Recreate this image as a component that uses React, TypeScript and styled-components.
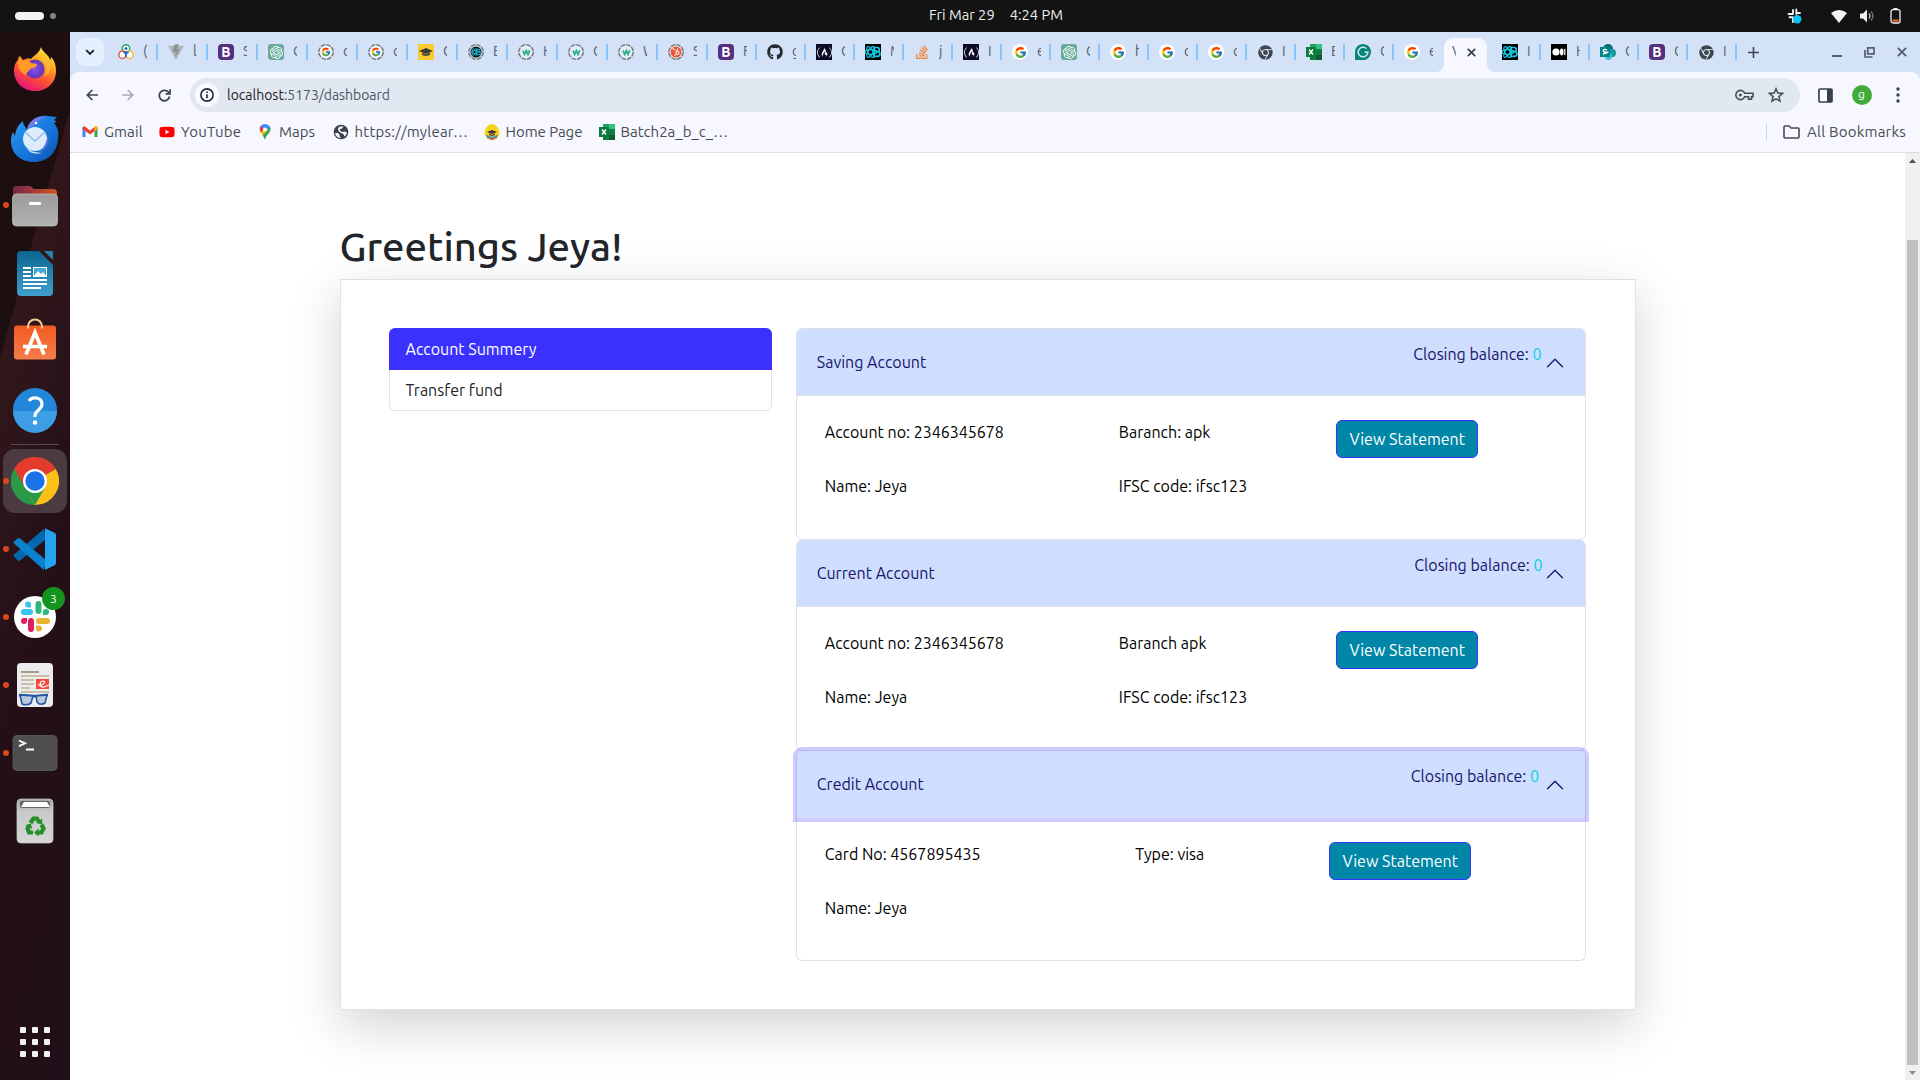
import React from "react";
import styled, { createGlobalStyle, css } from "styled-components";
import { FcGoogle } from "react-icons/fc";
import { FaGithub, FaStackOverflow, FaHubspot, FaFreeCodeCamp, FaChrome, FaYoutube } from "react-icons/fa";
import { SiOpenai, SiGrammarly } from "react-icons/si";

const GlobalStyle = createGlobalStyle`
  *, *::before, *::after { box-sizing: border-box; }
  body { margin: 0; background: #fff; overflow: hidden; font-family: Ubuntu, "Open Sans", "Noto Sans", sans-serif; }
  p, h1 { margin: 0; }
  svg { display: block; flex: none; }
`;

const Desktop = styled.div`
  width: 1920px; height: 1080px; display: flex; flex-direction: column; overflow: hidden;
`;

/* ---------- system bar ---------- */
const SystemBar = styled.header`
  height: 32px; flex: none; background: #131313; display: grid;
  grid-template-columns: 929px auto 1fr; align-items: center; color: #ededed; font-size: 14.67px;
`;
const Workspaces = styled.div`display: flex; align-items: center; gap: 6px; padding-left: 15px;`;
const ActiveSpace = styled.i`width: 29px; height: 8px; border-radius: 4px; background: #f2f2f2;`;
const SpaceDot = styled.i`width: 6px; height: 6px; border-radius: 50%; background: #838383;`;
const Clock = styled.div`display: flex; gap: 15px; line-height: 30px; height: 32px;`;
const Tray = styled.div`display: flex; align-items: center; justify-content: flex-end; padding-right: 19px;`;
const TrayItem = styled.span<{ $gap: number }>`margin-left: ${(p) => p.$gap}px;`;
const Txt = styled.span<{ $ls?: number }>`letter-spacing: ${(p) => p.$ls ?? 0}px; white-space: pre;`;

const Workarea = styled.div`flex: 1; min-height: 0; display: flex;`;

/* ---------- dock ---------- */
const Dock = styled.nav`
  width: 70px; flex: none; display: flex; flex-direction: column; padding-top: 3px;
  background: linear-gradient(105.8deg, #1d0f10 88px, #31171b 89px, #2b141a 140px, #240f17 200px, #211019 352px);
`;
const DockItem = styled.div<{ $running?: boolean }>`
  position: relative; height: 68px; display: flex; align-items: center; justify-content: center; flex: none;
  ${(p) => p.$running && css`
    &::before { content: ""; position: absolute; left: 3px; top: 31px; width: 6px; height: 6px; border-radius: 50%; background: #d9481a; z-index: 1; }
  `}
`;
const ActiveTile = styled.div`
  width: 64px; height: 64px; border-radius: 12px; background: #4b3b40; display: flex; align-items: center; justify-content: center;
`;
const DockRule = styled.div`height: 4px; padding: 1px 11px 0; flex: none; &::after { content: ""; display: block; height: 1px; background: #594a4f; }`;
const Badge = styled.span`
  position: absolute; right: 5px; top: 4px; width: 23px; height: 23px; border-radius: 50%;
  background: #14931f; color: #fff; font-size: 12px; line-height: 23px; text-align: center;
`;
const AppsButton = styled.div`
  margin-top: auto; height: 53px; padding: 0 20px; display: grid; grid-template-columns: repeat(3, 6px);
  grid-auto-rows: 6px; gap: 6px;
`;
const AppDot = styled.i`background: #f2f2f2; border-radius: 1px;`;

/* ---------- browser chrome ---------- */
const Browser = styled.div`flex: 1; min-width: 0; display: flex; flex-direction: column; background: #d3e2f7;`;
const TabStrip = styled.div`height: 40px; flex: none; display: flex; align-items: flex-start; padding: 6px 8px 0 6px;`;
const TabSearch = styled.button`
  width: 28px; height: 28px; border: 0; border-radius: 9px; background: #e5f0fe; padding: 0; margin-right: 2px;
  display: flex; align-items: center; justify-content: center; flex: none;
`;
const Tab = styled.div<{ $w: number; $rule: boolean }>`
  width: ${(p) => p.$w}px; height: 28px; flex: none; display: flex; align-items: center; gap: 9px;
  &::before { content: ""; width: 2px; height: 16px; margin-right: 1px; background: ${(p) => (p.$rule ? "#8ac6fd" : "transparent")}; }
`;
const TabTitle = styled.span`width: 4px; overflow: hidden; font-size: 14px; color: #4e5d6e; line-height: 20px; margin-bottom: 2px;`;
const ActiveTab = styled.div`
  position: relative; width: 43px; height: 34px; margin: 0 3px; flex: none; background: #f6f7ff; border-radius: 9px 9px 0 0;
  display: flex; align-items: center; padding: 0 11px 6px 8px; justify-content: space-between;
  &::before, &::after { content: ""; position: absolute; bottom: 0; width: 9px; height: 9px; }
  &::before { left: -9px; background: radial-gradient(circle at 0 0, transparent 9px, #f6f7ff 9.5px); }
  &::after { right: -9px; background: radial-gradient(circle at 100% 0, transparent 9px, #f6f7ff 9.5px); }
`;
const NewTab = styled.div`display: flex; align-items: center; height: 28px; &::before { content: ""; width: 2px; height: 16px; background: #8ac6fd; margin-right: 11px; }`;
const WindowButtons = styled.div`margin-left: auto; height: 28px; display: flex; align-items: center; gap: 22px; padding-right: 5px;`;

const Fav = styled.span<{ $bg?: string; $fg?: string; $round?: boolean; $r?: number }>`
  width: 16px; height: 16px; flex: none; display: flex; align-items: center; justify-content: center; overflow: hidden;
  background: ${(p) => p.$bg ?? "transparent"}; color: ${(p) => p.$fg ?? "#fff"};
  border-radius: ${(p) => (p.$round ? "50%" : `${p.$r ?? 0}px`)};
  font-weight: 700; font-size: 14px; line-height: 16px;
`;
const RingBox = styled.span<{ $fg?: string }>`
  width: 16px; height: 16px; flex: none; display: grid; place-items: center; color: ${(p) => p.$fg ?? "inherit"};
  > * { grid-area: 1 / 1; }
`;

const ToolbarBg = styled.div`background: #f6f7ff; border-radius: 9px 9px 0 0; flex: none;`;
const Toolbar = styled.div`height: 46px; display: flex; align-items: center; padding: 0 8px 0 12px;`;
const NavIcon = styled.span`width: 20px; height: 20px; margin-right: 16px; display: flex; align-items: center; justify-content: center;`;
const Omnibox = styled.div`
  width: 1610px; height: 34px; border-radius: 17px; background: #e1e8f2; display: flex; align-items: center; flex: none;
  padding: 0 16px 0 5px; font-size: 14px; color: #4d565f;
`;
const InfoCircle = styled.span`width: 24px; height: 24px; border-radius: 50%; background: #f9faff; display: flex; align-items: center; justify-content: center; margin-right: 8px;`;
const Host = styled.span`color: #1e2126;`;
const OmniActions = styled.span`margin-left: auto; display: flex; align-items: center; gap: 14px;`;
const ToolActions = styled.div`margin-left: 18px; display: flex; align-items: center; gap: 18.5px;`;
const DotsButton = styled.span`margin-left: 6px;`;
const Avatar = styled.span`width: 20px; height: 20px; border-radius: 50%; background: #43ab39; color: #fff; font-size: 12px; line-height: 18px; text-align: center;`;
const BookmarkBar = styled.div`height: 35px; border-bottom: 1px solid #dadfec; display: flex; align-items: center; padding: 0 14px 6px 12px; font-size: 15px; color: #474c52;`;
const Bookmark = styled.span<{ $w: number }>`width: ${(p) => p.$w}px; display: flex; align-items: center; gap: 6px; line-height: 20px;`;
const AllBookmarks = styled.span`margin-left: auto; display: flex; align-items: center; gap: 7px; line-height: 20px; &::before { content: ""; width: 1px; height: 16px; margin-right: 9px; background: #b4dbfd; }`;

/* ---------- page ---------- */
const Viewport = styled.div`flex: 1; min-height: 0; display: flex; background: #fff;`;
const Page = styled.main`flex: 1; display: flex; flex-direction: column; align-items: center; padding-top: 69.95px; color: #212529; overflow: hidden;`;
const Container = styled.div`width: 1296px;`;
const Greeting = styled.h1`font-size: 40px; font-weight: 500; line-height: 48px; margin-bottom: 8px; color: #212529;`;
const Card = styled.section`
  height: 731.4px; border: 1px solid #dee2e6; padding: 48px; display: flex; gap: 24px; align-items: flex-start;
  box-shadow: 0 16px 48px rgba(0, 0, 0, 0.175); background: #fff;
`;
const Menu = styled.div`width: 383.3px; border: 1px solid #dee2e6; border-radius: 6px; font-size: 16px;`;
const MenuItem = styled.div<{ $active?: boolean }>`
  height: ${(p) => (p.$active ? 42 : 40)}px; margin: ${(p) => (p.$active ? "-1px -1px 0" : "0")};
  padding: ${(p) => (p.$active ? "9px 17px 0" : "8px 16px 0")}; line-height: 24px;
  border-radius: ${(p) => (p.$active ? "6px 6px 0 0" : "0 0 6px 6px")};
  background: ${(p) => (p.$active ? "#3a31ff" : "#fff")}; color: ${(p) => (p.$active ? "#fff" : "#212529")};
`;
const Accordion = styled.div`width: 790.7px; flex: none; font-size: 16px; line-height: 24px;`;
const Item = styled.div<{ $first: boolean }>`
  border: 1px solid #dee2e6; border-radius: 6px; ${(p) => !p.$first && "border-top: 0;"}
`;
const ItemHeader = styled.div<{ $focus: boolean }>`
  height: 67px; padding: 0 20px; display: flex; align-items: center; background: #cfdeff; color: #17146b;
  border-radius: 5px 5px 0 0; position: relative;
  box-shadow: ${(p) => (p.$focus ? "0 0 0 4px rgba(83, 63, 255, 0.27)" : "inset 0 -1px 0 #dee2e6")};
  > svg { margin-top: 1px; }
`;
const Closing = styled.p<{ $right: number }>`margin: 0 ${(p) => p.$right}px 16px auto;`;
const Zero = styled.span`color: #0ecfe0;`;
const ItemBody = styled.div<{ $c1: number; $c2: number }>`
  height: 142.8px; padding: 24px 28px; color: #000; display: grid;
  grid-template-columns: ${(p) => p.$c1}px ${(p) => p.$c2}px auto; align-items: start; justify-content: start;
`;
const Details = styled.div`display: grid; row-gap: 30px;`;
const Statement = styled.button`
  width: 142px; height: 38px; border: 1px solid #3a31ff; border-radius: 6px; background: #0086a6; color: #fff;
  font: 16px/24px Ubuntu, "Open Sans", "Noto Sans", sans-serif; padding: 0;
`;
const ScrollTrack = styled.div`width: 15px; flex: none; background: #f0f0f0; display: flex; flex-direction: column; align-items: center; padding: 6px 0 5px;`;
const ScrollThumb = styled.div`width: 11px; height: 825px; background: #c0c0c0; margin: 77px 0 6px;`;

/* ---------- favicons ---------- */
const Ringed = ({ fill, fg, children }: { fill: string; fg?: string; children: React.ReactNode }) => (
  <RingBox $fg={fg}>
    <svg width="16" height="16" viewBox="0 0 16 16"><circle cx="8" cy="8" r="7.200" fill={fill} stroke="#74797f" strokeWidth="1.500" strokeDasharray="4.600 1.050" /></svg>
    {children}
  </RingBox>
);
const G = () => <Fav $bg="#fff" $round><FcGoogle size={13} /></Fav>;
const GDashed = () => <Ringed fill="#eef3fb"><FcGoogle size={10} /></Ringed>;
const Boot = () => <Fav $bg="#563080" $r={4}>B</Fav>;
const Gpt = () => <Fav $bg="#69ab9b" $r={3}><SiOpenai size={13} /></Fav>;
const W = () => (
  <Ringed fill="#e3ecf7">
    <svg width="9" height="7" viewBox="0 0 11 9"><path d="M1 2l2 5 2.300-5 2.200 5L9.600 1.500" fill="none" stroke="#2fae86" strokeWidth="2.200" /></svg>
  </Ringed>
);
const Fcc = () => <Fav $bg="#0b0b26"><FaFreeCodeCamp size={15} /></Fav>;
const reactBMark = (
  <>
    <ellipse cx="6" cy="8" rx="6" ry="2.400" strokeWidth="1.200" />
    <ellipse cx="5.500" cy="8" rx="6" ry="2.400" strokeWidth="1.200" transform="rotate(60 5.500 8)" />
    <ellipse cx="5.500" cy="8" rx="6" ry="2.400" strokeWidth="1.200" transform="rotate(-60 5.500 8)" />
    <path d="M9 3.500h3.200a2 2 0 0 1 0 4.200H9zM9 7.700h3.600a2.300 2.300 0 0 1 0 4.600H9z" strokeWidth="1.700" />
  </>
);
const ReactB = () => <Fav $bg="#000"><svg width="16" height="16" viewBox="0 0 16 16" fill="none" stroke="#18c8e2">{reactBMark}</svg></Fav>;
const ReactBRinged = () => (
  <Ringed fill="#d8e2ee">
    <svg width="12" height="12" viewBox="0 0 12 12"><circle cx="6" cy="6" r="5.500" fill="#06181d" /></svg>
    <svg width="10" height="10" viewBox="0 0 16 16" fill="none" stroke="#25b4ca">{reactBMark}</svg>
  </Ringed>
);
const Chrome = () => <Fav $fg="#40464e" $round><FaChrome size={15} /></Fav>;
const Hat = () => (
  <Fav $bg="#fccb2c">
    <svg width="14" height="14" viewBox="0 0 14 14"><path d="M0 6l7-3 7 3-7 3z" fill="#403b35" /><path d="M3 7.500v2.500q4 2 8 0V7.500L7 9.300z" fill="#57503f" /></svg>
  </Fav>
);
const Excel = () => (
  <svg width="16" height="16" viewBox="0 0 16 16">
    <path d="M4 0h12v16H4z" fill="#107c41" /><path d="M4 0h6v5H4z" fill="#21a366" /><path d="M10 0h6v5h-6z" fill="#33c481" /><path d="M10 11h6v5h-6z" fill="#0e5c34" />
    <path d="M0 3h10v10H0z" fill="#0b7a3b" /><path d="M3 5.500l4 5M7 5.500l-4 5" stroke="#fff" strokeWidth="1.500" />
  </svg>
);
const Share = () => (
  <svg width="16" height="16" viewBox="0 0 16 16">
    <circle cx="8" cy="5" r="5" fill="#036c70" /><circle cx="12" cy="9" r="4.200" fill="#1a9ba1" /><circle cx="8.500" cy="12.500" r="3.500" fill="#37c6d0" />
    <path d="M0 3h10v10H0z" fill="#038387" /><path d="M7 6q-3.700-1.500-3.700.5t3.500 1.700-3.800 1.800" fill="none" stroke="#fff" strokeWidth="1.400" />
  </svg>
);
const Medium = () => (
  <Fav $bg="#000">
    <svg width="14" height="8" viewBox="0 0 14 8" fill="#fff"><circle cx="4" cy="4" r="3.600" /><ellipse cx="9.700" cy="4" rx="1.800" ry="3.400" /><rect x="12.200" y=".8" width="1.200" height="6.400" /></svg>
  </Fav>
);
const Rings = () => (
  <svg width="16" height="16" viewBox="0 0 16 16" fill="none" strokeWidth="1.500">
    <circle cx="8" cy="4.500" r="3.700" stroke="#27a567" fill="#fff" /><circle cx="4.500" cy="10.700" r="3.700" stroke="#e25b4a" fill="#fff" /><circle cx="11.500" cy="10.700" r="3.700" stroke="#efb63d" fill="#fff" />
    <circle cx="8" cy="4.600" r="1.500" fill="#2b72b8" stroke="none" /><path d="M8 7v6M5.500 8l2.500 1.500L10.500 8" stroke="#2b72b8" strokeWidth="2" />
  </svg>
);
const Vite = () => (
  <svg width="16" height="16" viewBox="0 0 16 16"><path d="M0 1.500L8 16l8-14.500-8 1z" fill="#b1b4b9" /><path d="M6 1l5-1-2 5h3L7 13l1-5H5z" fill="#8c8f94" /></svg>
);

const leftTabs: [React.ReactNode, string][] = [
  [<Rings />, "("], [<Vite />, "l"], [<Boot />, "S"], [<Gpt />, "C"], [<GDashed />, "c"], [<GDashed />, "c"], [<Hat />, "C"],
  [<ReactBRinged />, "E"], [<W />, "H"], [<W />, "C"], [<W />, "W"],
  [<Ringed fill="#e5e9f0" fg="#f0573a"><svg width="12" height="12" viewBox="0 0 12 12"><circle cx="6" cy="6" r="5.500" fill="#f0573a" /></svg><Fav><FaHubspot size={8} /></Fav></Ringed>, "S"], [<Boot />, "F"],
  [<Fav $fg="#23292f"><FaGithub size={16} /></Fav>, "g"], [<Fcc />, "C"], [<ReactB />, "M"],
  [<Fav $fg="#f58233"><FaStackOverflow size={16} /></Fav>, "j"], [<Fcc />, "I"], [<G />, "e"], [<Gpt />, "C"], [<G />, "h"],
  [<G />, "c"], [<G />, "c"], [<Chrome />, "I"], [<Excel />, "E"],
  [<Fav $fg="#058572"><SiGrammarly size={16} /></Fav>, "C"], [<G />, "e"],
];
const rightTabs: [React.ReactNode, string][] = [
  [<ReactB />, "I"], [<Medium />, "H"], [<Share />, "C"], [<Boot />, "C"], [<Chrome />, "I"],
];

/* ---------- dock artwork ---------- */
const Firefox = () => (
  <svg width="48" height="48" viewBox="0 0 48 48">
    <defs>
      <linearGradient id="ff1" x1=".8" y1="0" x2=".3" y2="1"><stop offset="0" stopColor="#fff04a" /><stop offset=".35" stopColor="#ffa41e" /><stop offset=".65" stopColor="#ff4f33" /><stop offset="1" stopColor="#e3137f" /></linearGradient>
      <radialGradient id="ff2"><stop offset="0" stopColor="#8a52ee" /><stop offset="1" stopColor="#6332b5" /></radialGradient>
    </defs>
    <path d="M30 2c1 4 5 6 7 9 1 1 2 3 2 4 1-1 1-2 1-3 4 4 5 9 5 14 0 12-9 20-21 20S3 37 3 26c0-5 1-8 4-11l1-4 4 4c3-1 5-2 8-1 3-4 8-5 10-12z" fill="url(#ff1)" />
    <circle cx="24" cy="24" r="9.500" fill="url(#ff2)" />
    <path d="M7 16l2-5 3 5c4-1 6-1 8 2l6 1c0 3-3 4-7 5-1 3-4 3-4 6-3-1-9-5-8-14z" fill="#ff9a25" />
    <path d="M28 15c9 0 9 12 5 17 5-2 8-8 5-15-2-4-7-6-10-2z" fill="#ffbf35" opacity=".75" />
  </svg>
);
const Thunderbird = () => (
  <svg width="48" height="48" viewBox="0 -2 48 48" overflow="visible">
    <defs><linearGradient id="tb1" x1="0" y1="0" x2="1" y2="1"><stop offset="0" stopColor="#2b9cf2" /><stop offset=".6" stopColor="#1573d8" /><stop offset="1" stopColor="#0a4fa8" /></linearGradient></defs>
    <path d="M17 11C20 4 28 0 36 1l10 1-3 3c1 0 2 1 2 2l-2 1c4 5 5 9 4 16-1 14-11 23-24 23C9 47 0 38 0 26c0-5 1-6 2-9l2 4C5 13 8 9 12 6c0 5 3 5 4 9z" fill="url(#tb1)" />
    <path d="M16 14C19 5 27 1 35 2c-5 1-9 4-12 8z" fill="#7c79e8" />
    <circle cx="25" cy="8" r="1.200" fill="#fff" />
    <circle cx="24" cy="24" r="12" fill="#dcecfb" /><path d="M14 17l10 9 10-9" fill="none" stroke="#8dbce8" strokeWidth="1.500" />
    <path d="M16 33c4 4 8 4 15 5-8 2-14-1-15-5z" fill="#c3dbf6" /><path d="M37 20c2 10-3 16-10 18 6-5 8-10 10-18z" fill="#5a79df" opacity=".8" />
  </svg>
);
const Files = () => (
  <svg width="48" height="48" viewBox="0 0 48 48">
    <defs><linearGradient id="fi1"><stop offset="0" stopColor="#73284c" /><stop offset="1" stopColor="#d6511f" /></linearGradient><linearGradient id="fi2" x1="0" y1="0" x2="0" y2="1"><stop offset="0" stopColor="#9b9b9b" /><stop offset="1" stopColor="#b2b2b2" /></linearGradient></defs>
    <path d="M2 8q0-3 3-3h14l4 3h19q4 0 4 4v14H2z" fill="url(#fi1)" />
    <rect x="1.500" y="13" width="45" height="32" rx="4" fill="url(#fi2)" stroke="#c5c5c5" strokeWidth=".7" /><rect x="18" y="21" width="12" height="3" rx="1" fill="#fff" />
  </svg>
);
const Writer = () => (
  <svg width="48" height="48" viewBox="0 0 48 48">
    <defs><linearGradient id="wr1" x1="0" y1="0" x2="0" y2="1"><stop offset="0" stopColor="#0c6492" /><stop offset="1" stopColor="#40a0cd" /></linearGradient></defs>
    <path d="M10 2h18l14 14v27q0 4-4 4H10q-4 0-4-4V6q0-4 4-4z" fill="url(#wr1)" /><path d="M33 2h9v9z" fill="#2380ad" />
    <path d="M12 19h8M12 23h8M12 27h8M12 31h24M12 35h24M12 39h18" stroke="#fff" strokeWidth="2" />
    <rect x="22.500" y="18.500" width="13" height="9" fill="#45a9d8" stroke="#fff" /><path d="M23 27l4-5 3 3 2-2 3 4z" fill="#fff" />
  </svg>
);
const Software = () => (
  <svg width="48" height="48" viewBox="0 2.500 48 48" overflow="visible">
    <defs><linearGradient id="so1" x1="0" y1="0" x2="0" y2="1"><stop offset="0" stopColor="#f35b21" /><stop offset="1" stopColor="#f47d4c" /></linearGradient></defs>
    <rect x="3" y="11" width="42" height="34" rx="3" fill="url(#so1)" />
    <path d="M17 14v-2a7 7 0 0 1 14 0v2" fill="none" stroke="#f1cd9a" strokeWidth="2" />
    <path d="M15 40l9-22 9 22M12 32h24" fill="none" stroke="#fff" strokeWidth="3.600" />
  </svg>
);
const Help = () => (
  <svg width="48" height="48" viewBox="0 0 48 48">
    <circle cx="24" cy="25" r="22" fill="#2286da" /><path d="M2 26h44a22 22 0 0 1-44 0z" fill="#3e9ee5" />
    <path d="M18 16c3-5 13-4 13 3 0 6-7 6-7 12v1" fill="none" stroke="#fff" strokeWidth="3.200" /><circle cx="24" cy="37.500" r="2.300" fill="#fff" />
  </svg>
);
const ChromeLogo = () => (
  <svg width="48" height="48" viewBox="0 0 48 48">
    <path d="M24 24L3.200 12A24 24 0 0 1 44.800 12z" fill="#e33b2e" /><path d="M24 24L44.800 12A24 24 0 0 1 24 48z" fill="#fbc116" /><path d="M24 24L24 48A24 24 0 0 1 3.200 12z" fill="#2a9a48" />
    <path d="M24 12h20.800L40 12z" fill="#e33b2e" /><path d="M34.400 30L24 48l-6-8z" fill="#fbc116" /><path d="M13.600 30L24 48l10.400-18z" fill="#2a9a48" />
    <path d="M3.200 12A24 24 0 0 1 24 0v12L13.600 30z" fill="#e33b2e" /><path d="M3.200 12L13.600 30 24 48A24 24 0 0 1 3.200 12z" fill="#2a9a48" />
    <circle cx="24" cy="24" r="12" fill="#fff" /><circle cx="24" cy="24" r="9.700" fill="#1b72e8" />
  </svg>
);
const Code = () => (
  <svg width="48" height="48" viewBox="0 0 48 48">
    <path d="M3 31.500q-1-1 0-2L33 4l2 10L9 35.500q-1 .8-2.300 0z" fill="#0468ae" />
    <path d="M3 16.500q-1 1 0 2L33 45l2-10L9 13.500q-1-.8-2.300 0z" fill="#0b82ce" />
    <path d="M34 3.200l9.500 4.500q1.500.8 1.500 2.300v28q0 1.500-1.500 2.300L34 45z" fill="#25a3f1" />
  </svg>
);
const SlackPaths = () => (
  <>
    <path d="M19 12a3 3 0 0 1 0 6h-6a3 3 0 0 1 0-6z" transform="translate(0 4)" fill="#36c5f0" /><path d="M20 14.500v-3a3 3 0 1 0-3 3z" fill="#36c5f0" />
    <path d="M25 19v-7a3 3 0 0 1 6 0v7a3 3 0 0 1-6 0z" transform="translate(-.500 -1)" fill="#2eb67d" /><path d="M32 22h3a3 3 0 1 0-3-3z" fill="#2eb67d" />
    <path d="M28 25h8a3 3 0 0 1 0 6h-8a3 3 0 0 1 0-6z" fill="#ecb22e" /><path d="M25 32.500v3a3 3 0 1 0 3-3z" fill="#ecb22e" />
    <path d="M17 28v8a3 3 0 0 0 6 0v-8a3 3 0 0 0-6 0z" fill="#e01e5a" /><path d="M16 25h-3a3 3 0 1 0 3 3z" fill="#e01e5a" />
  </>
);
const Slack = () => <svg width="48" height="48" viewBox="0 0 48 48"><circle cx="24" cy="24" r="21" fill="#fff" /><SlackPaths /></svg>;
const Viewer = () => (
  <svg width="48" height="48" viewBox="0 0 48 48">
    <rect x="6" y="2" width="36" height="44" rx="4" fill="#ececec" />
    <path d="M10 11h18" stroke="#a59d8a" strokeWidth="2" /><path d="M10 15h28M10 19h13M10 23h13M10 27h9M10 31h28" stroke="#c9c1ae" strokeWidth="2" />
    <rect x="25" y="18" width="13" height="10" fill="#f2493d" /><path d="M27 24c5 1 9-4 5-4s-4 7 1 6l5-2" fill="none" stroke="#fff" strokeWidth="1.200" />
    <path d="M8 34l14 1h4l11-1" fill="none" stroke="#1f4e9b" strokeWidth="2.500" /><path d="M9 34l2 9q5 2 9-1l2-7zM36 34l-2 8q-5 3-8-1l-1-6z" fill="#bac8dc" stroke="#2558a5" strokeWidth="1.600" />
  </svg>
);
const Terminal = () => (
  <svg width="48" height="48" viewBox="0 0 48 48">
    <rect x="2" y="6.500" width="44" height="35" rx="4" fill="#4e4e4e" stroke="#646464" strokeWidth=".7" />
    <path d="M8 11.500l6 2.800-6 2.800M15 20.500h8" fill="none" stroke="#fff" strokeWidth="1.900" />
  </svg>
);
const Trash = () => (
  <svg width="48" height="48" viewBox="0 0 48 48">
    <defs><linearGradient id="tr1" x1="0" y1="0" x2="0" y2="1"><stop offset="0" stopColor="#a5a5a5" /><stop offset=".3" stopColor="#c9c9c9" /><stop offset="1" stopColor="#d6d6d6" /></linearGradient></defs>
    <rect x="6" y="2" width="36" height="44" rx="4" fill="url(#tr1)" stroke="#d4d4d4" strokeWidth=".7" />
    <rect x="9" y="4" width="30" height="7" rx="2" fill="#666" /><path d="M10 10l3-5h23l3 5z" fill="#fff" />
    <g fill="none" stroke="#23902a" strokeWidth="4.200"><path d="M19.500 26l3-4.500h3.500l2 3.500" /><path d="M30.500 27.500l2 4-2 4h-4" /><path d="M22 35.500h-4l-1.500-4 2-3.500" /></g>
    <path d="M25.500 26.500l6 .5-.500-5.500zM27.500 31.500v8l-4.500-4zM14.500 28.500l5.500-2 1 5.500z" fill="#23902a" />
  </svg>
);

const Cross = ({ s = 9, c = "#3c4147" }: { s?: number; c?: string }) => (
  <svg width={s} height={s} viewBox="0 0 8 8"><path d="M.7.7l6.600 6.600M7.300.7L.7 7.300" stroke={c} strokeWidth="1.500" /></svg>
);
const Chevron = () => (
  <svg width="20" height="20" viewBox="0 0 16 16"><path d="M2 11l6-6 6 6" fill="none" stroke="#17146b" strokeWidth="1.050" strokeLinecap="round" strokeLinejoin="round" /></svg>
);

interface Account {
  title: string; right: number; c1: number; c2: number; left: string[]; mid: string[]; focus: boolean;
}
const accounts: Account[] = [
  { title: "Saving Account", right: 4, c1: 294, c2: 217.5, focus: false, left: ["Account no: 2346345678", "Name: Jeya"], mid: ["Baranch: apk", "IFSC code: ifsc123"] },
  { title: "Current Account", right: 3, c1: 294, c2: 217.5, focus: false, left: ["Account no: 2346345678", "Name: Jeya"], mid: ["Baranch apk", "IFSC code: ifsc123"] },
  { title: "Credit Account", right: 6.5, c1: 310.5, c2: 194, focus: true, left: ["Card No: 4567895435", "Name: Jeya"], mid: ["Type: visa"] },
];

const AccountItem = ({ a, first }: { a: Account; first: boolean }) => (
  <Item $first={first}>
    <ItemHeader $focus={a.focus}>
      <Txt>{a.title}</Txt>
      <Closing $right={a.right}>Closing balance: <Zero>0</Zero></Closing>
      <Chevron />
    </ItemHeader>
    <ItemBody $c1={a.c1} $c2={a.c2}>
      <Details>{a.left.map((t) => <Txt key={t}>{t}</Txt>)}</Details>
      <Details>{a.mid.map((t) => <Txt key={t}>{t}</Txt>)}</Details>
      <Statement>View Statement</Statement>
    </ItemBody>
  </Item>
);

export default function App() {
  return (
    <Desktop>
      <GlobalStyle />
      <SystemBar>
        <Workspaces><ActiveSpace /><SpaceDot /></Workspaces>
        <Clock><Txt>Fri Mar 29</Txt><Txt>4:24 PM</Txt></Clock>
        <Tray>
          <TrayItem $gap={0}>
            <svg width="15" height="16" viewBox="0 0 15 16"><g stroke="#f0f0f0" strokeWidth="1.900" strokeLinecap="round"><path d="M6 2v3.500M9.300 1.500V6M1.500 6H6M10 5h3M2.500 9.300H5M6 9.500V14" /></g><circle cx="10.200" cy="11.200" r="4.200" fill="#07c6f4" /></svg>
          </TrayItem>
          <TrayItem $gap={29}><svg width="16" height="13" viewBox="0 0 16 13"><path d="M0 3q8-6 16 0L8 13z" fill="#f2f2f2" /></svg></TrayItem>
          <TrayItem $gap={13}>
            <svg width="16" height="14" viewBox="0 0 16 14"><path d="M0 4.500h3L7 .5v13l-4-4H0z" fill="#f2f2f2" /><path d="M9 4.500q2 2.500 0 5" fill="none" stroke="#c5c5c5" strokeWidth="1.300" /><path d="M11 2.500q4 4.500 0 9" fill="none" stroke="#7a7a7a" strokeWidth="1.300" /></svg>
          </TrayItem>
          <TrayItem $gap={14}>
            <svg width="11" height="16" viewBox="0 0 11 16"><path d="M3.500 0h4v2h-4z" fill="#f2f2f2" /><rect x="1" y="1.700" width="9" height="13.300" rx="2" fill="none" stroke="#f2f2f2" strokeWidth="1.300" /><path d="M2.500 11.500h6v2.200h-6z" fill="#f0652b" /></svg>
          </TrayItem>
        </Tray>
      </SystemBar>

      <Workarea>
        <Dock>
          <DockItem><Firefox /></DockItem>
          <DockItem><Thunderbird /></DockItem>
          <DockItem $running><Files /></DockItem>
          <DockItem><Writer /></DockItem>
          <DockItem><Software /></DockItem>
          <DockItem><Help /></DockItem>
          <DockRule />
          <DockItem $running><ActiveTile><ChromeLogo /></ActiveTile></DockItem>
          <DockItem $running><Code /></DockItem>
          <DockItem $running><Slack /><Badge>3</Badge></DockItem>
          <DockItem $running><Viewer /></DockItem>
          <DockItem $running><Terminal /></DockItem>
          <DockItem><Trash /></DockItem>
          <AppsButton>{Array.from({ length: 9 }, (_, i) => <AppDot key={i} />)}</AppsButton>
        </Dock>

        <Browser>
          <TabStrip>
            <TabSearch><svg width="10" height="7" viewBox="0 0 10 7"><path d="M1.200 1.200L5 5l3.800-3.800" fill="none" stroke="#1d2228" strokeWidth="1.900" /></svg></TabSearch>
            {leftTabs.map(([icon, t], i) => (
              <Tab key={i} $w={i < 12 ? 50 : 49} $rule={i > 0}>{icon}<TabTitle>{t}</TabTitle></Tab>
            ))}
            <ActiveTab><TabTitle>V</TabTitle><Cross /></ActiveTab>
            {rightTabs.map(([icon, t], i) => (
              <Tab key={i} $w={49} $rule={i > 0}>{icon}<TabTitle>{t}</TabTitle></Tab>
            ))}
            <NewTab><svg width="11" height="11" viewBox="0 0 11 11"><path d="M5.500 0v11M0 5.500h11" stroke="#3c4650" strokeWidth="1.600" /></svg></NewTab>
            <WindowButtons>
              <svg width="10" height="10" viewBox="0 0 10 10"><path d="M0 9h10" stroke="#55606e" strokeWidth="2" /></svg>
              <svg width="11" height="11" viewBox="0 0 11 11" fill="none" stroke="#55606e" strokeWidth="1.700"><path d="M3.700.9h6.300v5.900H3.700zM1 3v7h7.500" /></svg>
              <Cross s={10} c="#55606e" />
            </WindowButtons>
          </TabStrip>

          <ToolbarBg>
            <Toolbar>
              <NavIcon><svg width="12" height="12" viewBox="0 0 12 12" fill="none" stroke="#3b4854" strokeWidth="1.700"><path d="M12 6H1.500M6.300 1L1.300 6l5 5" /></svg></NavIcon>
              <NavIcon><svg width="12" height="12" viewBox="0 0 12 12" fill="none" stroke="#a9abb2" strokeWidth="1.700"><path d="M0 6h10.500M5.700 1l5 5-5 5" /></svg></NavIcon>
              <NavIcon><svg width="13" height="13" viewBox="0 0 13 13" fill="none" stroke="#3b4854" strokeWidth="1.800"><path d="M11.600 7.500A5.200 5.200 0 1 1 10.300 3L12 4.700M12 .3v4.500H7.600" /></svg></NavIcon>
              <Omnibox>
                <InfoCircle><svg width="14" height="14" viewBox="0 0 14 14" fill="none" stroke="#24282e" strokeWidth="1.600"><circle cx="7" cy="7" r="6.100" /><path d="M7 6.300v4M7 3.500v1.500" /></svg></InfoCircle>
                <Host>localhost</Host><Txt $ls={-0.05}>:5173/dashboard</Txt>
                <OmniActions>
                  <svg width="19" height="12" viewBox="0 0 19 12" fill="none" stroke="#444b54" strokeWidth="1.600"><path d="M9.700 4.300H18v3.400h-1.500v2.500h-3V7.700H9.700a4.600 4.600 0 1 1 0-3.400z" /><circle cx="5.400" cy="6" r="1.500" fill="#444b54" stroke="none" /></svg>
                  <svg width="16" height="16" viewBox="0 0 16 16" fill="none" stroke="#444b54" strokeWidth="1.500"><path d="M8 1.800l1.800 4.300 4.700.4-3.600 3.100 1.100 4.600L8 11.800l-4 2.400 1.100-4.600L1.500 6.500l4.700-.4z" /></svg>
                </OmniActions>
              </Omnibox>
              <ToolActions>
                <svg width="15" height="15" viewBox="0 0 15 15"><rect x="1" y="1" width="13" height="13" rx="1" fill="#fff" stroke="#34424f" strokeWidth="1.700" /><path d="M9 1h5v13H9z" fill="#34424f" /></svg>
                <Avatar>g</Avatar>
                <DotsButton><svg width="4" height="16" viewBox="0 0 4 16" fill="#34424f"><circle cx="2" cy="2" r="1.700" /><circle cx="2" cy="8" r="1.700" /><circle cx="2" cy="14" r="1.700" /></svg></DotsButton>
              </ToolActions>
            </Toolbar>
            <BookmarkBar>
              <Bookmark $w={77}>
                <svg width="16" height="16" viewBox="0 0 16 16"><path d="M.5 3.500v9.500h3V7z" fill="#4285f4" /><path d="M15.500 3.500v9.500h-3V7z" fill="#34a853" /><path d="M.5 3.500Q2 1.500 3.500 3L8 6.500 12.500 3Q14 1.500 15.500 3.500V5L8 10.500.5 5z" fill="#ea4335" /><path d="M12.500 3Q14 1.500 15.500 3.500V5l-3 2.300z" fill="#fbbc04" /></svg>
                <Txt $ls={0.1}>Gmail</Txt>
              </Bookmark>
              <Bookmark $w={98}><FaYoutube size={16} color="#f00" /><Txt $ls={0.17}>YouTube</Txt></Bookmark>
              <Bookmark $w={75.5}>
                <svg width="16" height="16" viewBox="0 0 16 16"><path d="M8 0a5.500 5.500 0 0 0-5.500 5.500L8 6z" fill="#4285f4" /><path d="M8 0a5.500 5.500 0 0 1 5.500 5.500L8 5z" fill="#4285f4" /><path d="M3.600 2.200L7 5 4 9Q2 6 3.600 2.200z" fill="#ea4335" /><path d="M4 9l4.500-4.500 2 2L6 12z" fill="#fbbc04" /><path d="M13 3q1.500 4-2 7-2 2-3 6-1-3-2.200-4.500z" fill="#34a853" /><circle cx="8" cy="5.500" r="2" fill="#fff" /></svg>
                <Txt>Maps</Txt>
              </Bookmark>
              <Bookmark $w={151}>
                <svg width="16" height="16" viewBox="0 0 16 16"><circle cx="8" cy="8" r="7.300" fill="#3d4248" /><path d="M2 9l3 0 1.500 1.500V12L8 14q-5 0-6-5zM7 2.500l3.500 0L9 4.500 7 5v1.500L9 8l3-.5 2 1-1 2.500-1.500 1.500L10.500 10 8 9 5.500 7 5 4z" fill="#f6f7ff" /></svg>
                <Txt $ls={0.22}>https://mylear…</Txt>
              </Bookmark>
              <Bookmark $w={115}>
                <svg width="16" height="16" viewBox="0 0 16 16"><path d="M8 0C12 0 15.500 5 15.500 9S12 16 8 16 .5 13 .5 9 4 0 8 0z" fill="#f6d21b" /><path d="M2 10.500l6 2.500 6-2.500-1.500 4h-9z" fill="#4793b8" /><path d="M3 8l5-2 5 2-5 2z" fill="#3d362a" /><path d="M5 9.300V11q3 2 6 0V9.300l-3 1.400z" fill="#5d503a" /><path d="M5.500 14h5L9.500 16h-3z" fill="#e2602c" /></svg>
                <Txt $ls={-0.05}>Home Page</Txt>
              </Bookmark>
              <Bookmark $w={150}><Excel /><Txt>Batch2a_b_c_…</Txt></Bookmark>
              <AllBookmarks>
                <svg width="17" height="14" viewBox="0 0 17 14"><path d="M1 2q0-1 1-1h4l2 2h7q1 0 1 1v8q0 1-1 1H2q-1 0-1-1z" fill="none" stroke="#474c52" strokeWidth="1.600" /></svg>
                <Txt $ls={0.22}>All Bookmarks</Txt>
              </AllBookmarks>
            </BookmarkBar>
          </ToolbarBg>

          <Viewport>
            <Page>
              <Container>
                <Greeting>Greetings Jeya!</Greeting>
                <Card>
                  <Menu>
                    <MenuItem $active>Account Summery</MenuItem>
                    <MenuItem>Transfer fund</MenuItem>
                  </Menu>
                  <Accordion>{accounts.map((a, i) => <AccountItem key={i} a={a} first={i === 0} />)}</Accordion>
                </Card>
              </Container>
            </Page>
            <ScrollTrack>
              <svg width="7" height="4" viewBox="0 0 7 4"><path d="M3.500 0L7 4H0z" fill="#4d4d4d" /></svg>
              <ScrollThumb />
              <svg width="7" height="4" viewBox="0 0 7 4"><path d="M0 0h7L3.500 4z" fill="#8c8c8c" /></svg>
            </ScrollTrack>
          </Viewport>
        </Browser>
      </Workarea>
    </Desktop>
  );
}
